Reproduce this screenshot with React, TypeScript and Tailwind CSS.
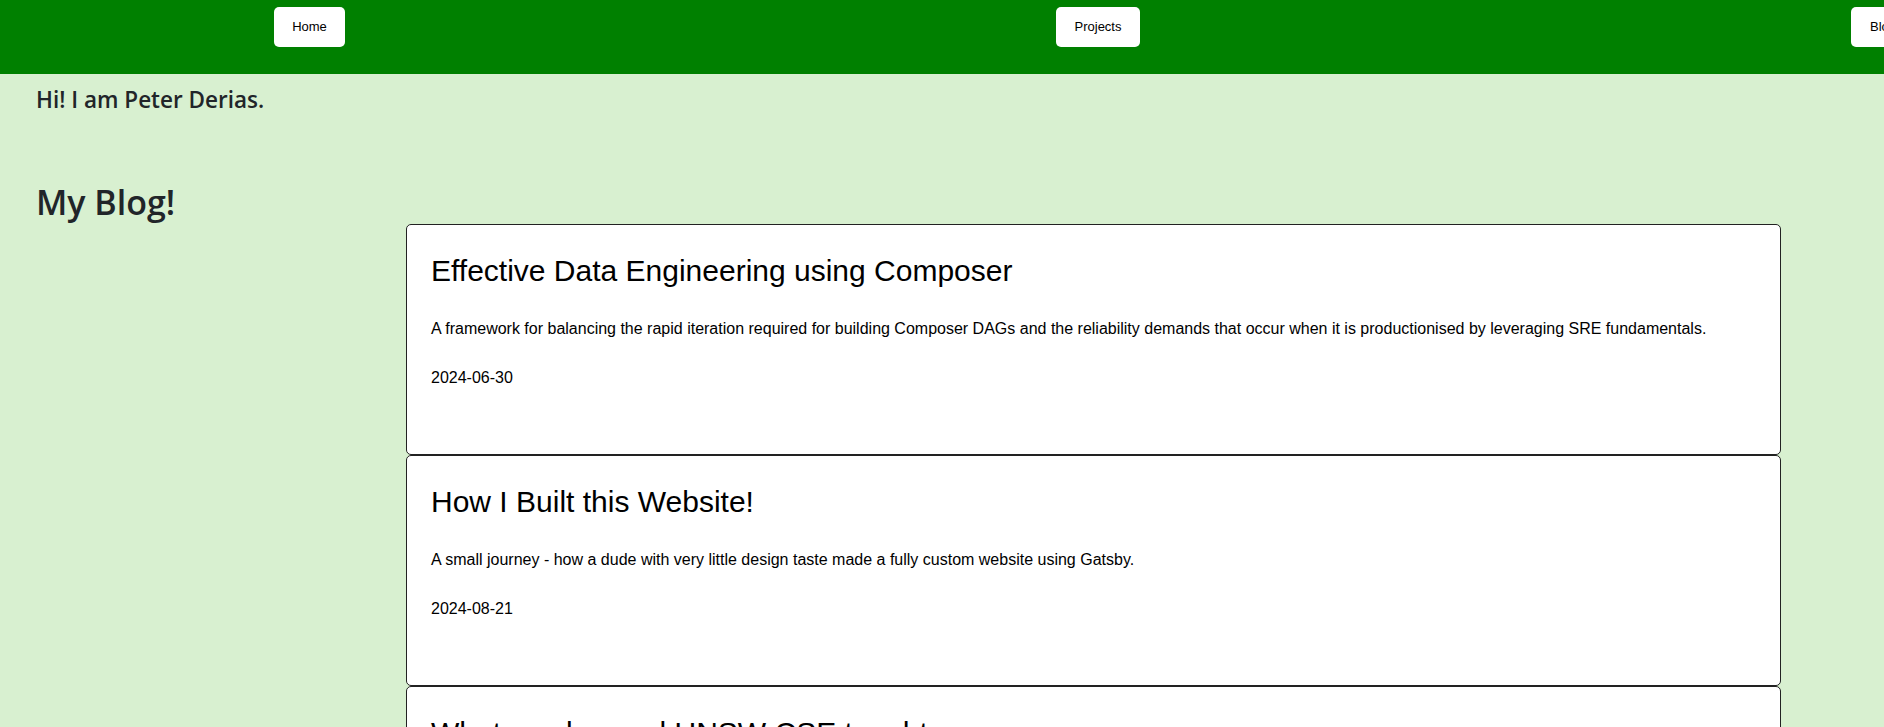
const navItems = [
  { label: 'Home', width: 'w-[71px]' },
  { label: 'Projects', width: 'w-[84px]' },
  { label: 'Blog', width: 'w-[64px]' },
];

const posts = [
  {
    title: 'Effective Data Engineering using Composer',
    summary:
      'A framework for balancing the rapid iteration required for building Composer DAGs and the reliability demands that occur when it is productionised by leveraging SRE fundamentals.',
    date: '2024-06-30',
  },
  {
    title: 'How I Built this Website!',
    summary:
      'A small journey - how a dude with very little design taste made a fully custom website using Gatsby.',
    date: '2024-08-21',
  },
  {
    title: 'What you learned UNSW CSE taught',
    summary: 'Some notes on the things the degree actually teaches you.',
    date: '2024-09-15',
  },
];

export default function App() {
  return (
    <div className="min-h-screen overflow-hidden bg-[#d8f0d0]">
      <header className="h-[74px] overflow-hidden bg-[#008000]">
        <nav className="flex gap-[711px] pl-[274px] pt-[7px]">
          {navItems.map((item) => (
            <button
              key={item.label}
              className={`${item.width} h-[40px] shrink-0 rounded-[5px] bg-white font-['Liberation_Sans',Arial,sans-serif] text-[13px] text-black`}>
              {item.label}
            </button>
          ))}
        </nav>
      </header>

      <main className="px-[36px] font-['Open_Sans','Noto_Sans',sans-serif] text-[#212529]">
        <h1 className="mt-[13px] text-[22.5px] leading-[26px] font-semibold">
          Hi! I am Peter Derias.
        </h1>
        <h2 className="mt-[68px] text-[34px] leading-[43px] font-semibold">
          My Blog!
        </h2>

        <div className="ml-[370px] w-[1375px] font-['Liberation_Sans',Arial,sans-serif] text-black">
          {posts.map((post) => (
            <article
              key={post.title}
              className="h-[231px] rounded-[5px] border border-[#222] bg-white px-[24px] pt-[28px]">
              <h3 className="text-[30px] leading-[36px]">{post.title}</h3>
              <p className="mt-[30px] text-[16px] leading-[19px]">
                {post.summary}
              </p>
              <p className="mt-[30px] text-[16px] leading-[19px]">
                {post.date}
              </p>
            </article>
          ))}
        </div>
      </main>
    </div>
  );
}
